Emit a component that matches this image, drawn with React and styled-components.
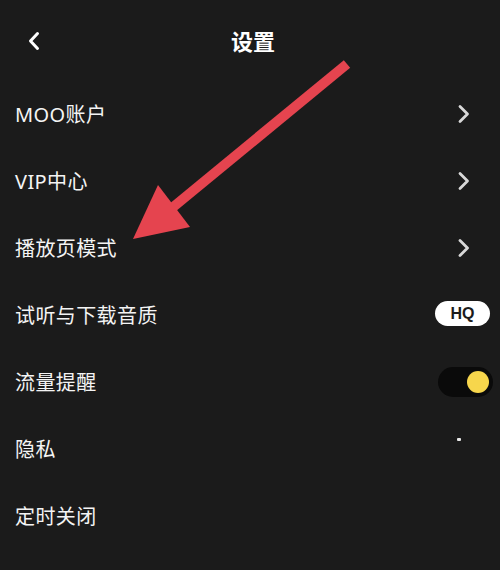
import styled, { createGlobalStyle } from "styled-components";

const GlobalStyle = createGlobalStyle`
  html, body {
    margin: 0;
    padding: 0;
    background: #1b1b1b;
  }
  * { box-sizing: border-box; }
`;

const items = [
  { label: "MOO账户", kind: "chevron" },
  { label: "VIP中心", kind: "chevron" },
  { label: "播放页模式", kind: "chevron" },
  { label: "试听与下载音质", kind: "badge", value: "HQ" },
  { label: "流量提醒", kind: "toggle", on: true },
  { label: "隐私", kind: "dot" },
  { label: "定时关闭", kind: "none" },
];

function ChevronRight() {
  return (
    <svg width="14" height="20" viewBox="0 0 14 20">
      <path d="M3 2.5 L10.5 10 L3 17.5" fill="none" stroke="#d8d8d8" strokeWidth="2.8" strokeLinecap="round" strokeLinejoin="round" />
    </svg>
  );
}

function ChevronLeft() {
  return (
    <svg width="14" height="20" viewBox="0 0 14 20">
      <path d="M10.5 2.5 L3.5 10 L10.5 17.5" fill="none" stroke="#ffffff" strokeWidth="3" strokeLinecap="round" strokeLinejoin="round" />
    </svg>
  );
}

function Trailing({ item }) {
  if (item.kind === "chevron") return <ChevronRight />;
  if (item.kind === "badge") return <Badge>{item.value}</Badge>;
  if (item.kind === "toggle")
    return (
      <Toggle>
        <Knob $on={item.on} />
      </Toggle>
    );
  if (item.kind === "dot") return <Dot />;
  return null;
}

export default function App() {
  return (
    <>
      <GlobalStyle />
      <Page>
        <Header>
          <BackButton>
            <ChevronLeft />
          </BackButton>
          <Title>设置</Title>
        </Header>
        <List>
          {items.map((item) => (
            <Row key={item.label}>
              <Label>{item.label}</Label>
              <Trailing item={item} />
            </Row>
          ))}
        </List>
        <Arrow viewBox="0 0 500 570" width="500" height="570">
          <line x1="347" y1="64" x2="172" y2="208" stroke="#e5444f" strokeWidth="10" />
          <polygon points="158,185 190,227 133,239" fill="#e5444f" />
        </Arrow>
      </Page>
    </>
  );
}

const Page = styled.div`
  position: relative;
  width: 500px;
  height: 570px;
  overflow: hidden;
  background: #1b1b1b;
  font-family: "Noto Sans", "Noto Sans CJK SC", sans-serif;
  color: #f4f4f4;
`;

const Header = styled.div`
  position: relative;
  height: 80px;
  display: flex;
  align-items: center;
  justify-content: center;
`;

const BackButton = styled.div`
  position: absolute;
  left: 27px;
  top: 31px;
  display: flex;
`;

const Title = styled.div`
  font-size: 22px;
  font-weight: 700;
  color: #ffffff;
  margin-left: 6px;
`;

const List = styled.div`
  display: flex;
  flex-direction: column;
`;

const Row = styled.div`
  height: 67px;
  display: flex;
  align-items: center;
  justify-content: space-between;
  padding: 0 7px 0 15px;
  & > svg {
    margin-right: 22px;
  }
`;

const Label = styled.div`
  font-size: 20px;
  font-weight: 400;
  color: #f4f4f4;
  letter-spacing: 0.4px;
`;

const Badge = styled.div`
  width: 55px;
  height: 25px;
  border-radius: 13px;
  background: #ffffff;
  color: #1b1b1b;
  font-family: "Liberation Sans", "Noto Sans", sans-serif;
  font-weight: 700;
  font-size: 16px;
  display: flex;
  align-items: center;
  justify-content: center;
  margin-right: 3px;
  margin-top: -2px;
`;

const Toggle = styled.div`
  width: 55px;
  height: 30px;
  border-radius: 15px;
  background: #0a0a0a;
  display: flex;
  align-items: center;
  padding: 0 4px;
`;

const Knob = styled.div`
  width: 22px;
  height: 22px;
  border-radius: 50%;
  background: ${(p) => (p.$on ? "#f7d64c" : "#888")};
  margin-left: ${(p) => (p.$on ? "auto" : "0")};
`;

const Dot = styled.div`
  width: 4px;
  height: 3px;
  background: #e8e8e8;
  border-radius: 1px;
  margin-right: 32px;
  margin-top: -18px;
`;

const Arrow = styled.svg`
  position: absolute;
  left: 0;
  top: 0;
  pointer-events: none;
`;
